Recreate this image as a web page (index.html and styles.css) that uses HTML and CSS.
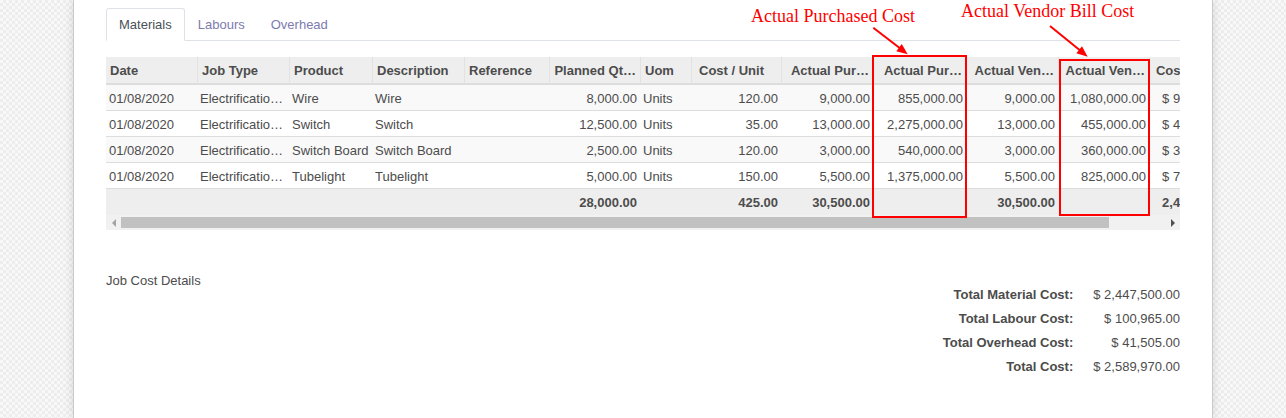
FILE: index.html
```html
<!DOCTYPE html>
<html lang="en">
<head>
<meta charset="utf-8">
<title>Job Cost Sheet</title>
<link rel="stylesheet" href="styles.css">
</head>
<body>
<div class="sheet">
  <ul class="tabs">
    <li class="tab active">Materials</li>
    <li class="tab">Labours</li>
    <li class="tab">Overhead</li>
  </ul>

  <div class="grid-wrap">
    <div class="grid-clip">
      <table class="grid">
        <colgroup>
          <col class="w91"><col class="w92"><col class="w83"><col class="w92"><col class="w85">
          <col class="w91"><col class="w51"><col class="w90"><col class="w92"><col class="w93">
          <col class="w92"><col class="w91"><col class="w92">
        </colgroup>
        <thead>
          <tr>
            <th>Date</th>
            <th>Job Type</th>
            <th>Product</th>
            <th>Description</th>
            <th>Reference</th>
            <th class="num">Planned Qt…</th>
            <th>Uom</th>
            <th class="num pad-sort">Cost / Unit</th>
            <th class="num">Actual Pur…</th>
            <th class="num">Actual Pur…</th>
            <th class="num">Actual Ven…</th>
            <th class="num">Actual Ven…</th>
            <th class="num">Cost Amount</th>
          </tr>
        </thead>
        <tbody>
          <tr>
            <td>01/08/2020</td><td>Electrificatio…</td><td>Wire</td><td>Wire</td><td></td>
            <td class="num">8,000.00</td><td>Units</td><td class="num">120.00</td><td class="num">9,000.00</td>
            <td class="num">855,000.00</td><td class="num">9,000.00</td><td class="num">1,080,000.00</td><td class="num">$ 960,000.00</td>
          </tr>
          <tr>
            <td>01/08/2020</td><td>Electrificatio…</td><td>Switch</td><td>Switch</td><td></td>
            <td class="num">12,500.00</td><td>Units</td><td class="num">35.00</td><td class="num">13,000.00</td>
            <td class="num">2,275,000.00</td><td class="num">13,000.00</td><td class="num">455,000.00</td><td class="num">$ 437,500.00</td>
          </tr>
          <tr>
            <td>01/08/2020</td><td>Electrificatio…</td><td>Switch Board</td><td>Switch Board</td><td></td>
            <td class="num">2,500.00</td><td>Units</td><td class="num">120.00</td><td class="num">3,000.00</td>
            <td class="num">540,000.00</td><td class="num">3,000.00</td><td class="num">360,000.00</td><td class="num">$ 300,000.00</td>
          </tr>
          <tr>
            <td>01/08/2020</td><td>Electrificatio…</td><td>Tubelight</td><td>Tubelight</td><td></td>
            <td class="num">5,000.00</td><td>Units</td><td class="num">150.00</td><td class="num">5,500.00</td>
            <td class="num">1,375,000.00</td><td class="num">5,500.00</td><td class="num">825,000.00</td><td class="num">$ 750,000.00</td>
          </tr>
        </tbody>
        <tfoot>
          <tr>
            <td></td><td></td><td></td><td></td><td></td>
            <td class="num">28,000.00</td><td></td><td class="num">425.00</td><td class="num">30,500.00</td>
            <td></td><td class="num">30,500.00</td><td></td><td class="num">2,447,500.00</td>
          </tr>
        </tfoot>
      </table>
    </div>
    <div class="hscroll">
      <span class="sb-btn"><span class="tri tri-left"></span></span>
      <div class="sb-track"><div class="sb-thumb"></div></div>
      <span class="sb-btn"><span class="tri tri-right"></span></span>
    </div>
  </div>

  <div class="summary">
    <div class="summary-title">Job Cost Details</div>
    <dl class="totals">
      <dt>Total Material Cost:</dt><dd>$ 2,447,500.00</dd>
      <dt>Total Labour Cost:</dt><dd>$ 100,965.00</dd>
      <dt>Total Overhead Cost:</dt><dd>$ 41,505.00</dd>
      <dt>Total Cost:</dt><dd>$ 2,589,970.00</dd>
    </dl>
  </div>
</div>

<div class="annot annot-1">Actual Purchased Cost</div>
<div class="annot annot-2">Actual Vendor Bill Cost</div>
<div class="callout-box box-1"></div>
<div class="callout-box box-2"></div>
<svg class="arrows" width="1286" height="418" viewBox="0 0 1286 418" aria-hidden="true">
  <line x1="873.3" y1="27.7" x2="900" y2="48.3" stroke="#ff0000" stroke-width="2"/>
  <polygon points="907.7,54.3 896.3,51.2 901.8,44.0" fill="#ff0000"/>
  <line x1="1050" y1="26" x2="1080.5" y2="50.7" stroke="#ff0000" stroke-width="2"/>
  <polygon points="1087.7,56.7 1076.3,53.2 1082.0,46.2" fill="#ff0000"/>
</svg>
</body>
</html>
```

FILE: styles.css
```css
html, body {
  margin: 0;
  padding: 0;
}

body {
  background-color: #f8f8f8;
  background-image: conic-gradient(#ededed 25%, transparent 0 50%, #ededed 0 75%, transparent 0);
  background-size: 6px 6px;
  font-family: "Liberation Sans", Arial, sans-serif;
  font-size: 13px;
  color: #4c4c4c;
  min-height: 418px;
  overflow: hidden;
}

.sheet {
  box-sizing: border-box;
  width: 1140px;
  min-height: 418px;
  margin: 0 auto;
  padding: 8px 32px 0;
  background: #fff;
  border-left: 1px solid #c9c9d4;
  border-right: 1px solid #c9c9d4;
  box-shadow: 0 0 10px rgba(0, 0, 0, 0.13);
}

/* Tabs */
.tabs {
  display: flex;
  list-style: none;
  margin: 0;
  padding: 0;
  border-bottom: 1px solid #dee2e6;
}

.tab {
  padding: 6px 12px;
  line-height: 19px;
  border: 1px solid transparent;
  border-radius: 3px 3px 0 0;
  margin-bottom: -1px;
  color: #7c7bad;
}

.tab.active {
  color: #495057;
  background: #fff;
  border-color: #dee2e6 #dee2e6 #fff;
}

/* Grid */
.grid-wrap {
  margin-top: 16px;
}

.grid-clip {
  overflow: hidden;
}

.grid {
  width: 1135px;
  table-layout: fixed;
  border-collapse: separate;
  border-spacing: 0;
}

.w51 { width: 51px; }
.w83 { width: 83px; }
.w85 { width: 85px; }
.w90 { width: 90px; }
.w91 { width: 91px; }
.w92 { width: 92px; }
.w93 { width: 93px; }

.grid th {
  background: #eeeeee;
  font-weight: bold;
  text-align: left;
  padding: 4px 4px 2px;
  line-height: 20px;
  border-bottom: 2px solid #dddddd;
  white-space: nowrap;
  overflow: hidden;
}

.grid th + th {
  border-left: 1px solid #e2e2e2;
}

.grid td {
  padding: 4px 3px 2px;
  line-height: 19px;
  border-bottom: 1px solid #dddddd;
  white-space: nowrap;
  overflow: hidden;
}

.grid tbody tr:nth-child(odd) td {
  background: #f9f9f9;
}

.grid tfoot td {
  background: #eeeeee;
  font-weight: bold;
  line-height: 20px;
  border-bottom: 0;
}

.grid .num {
  text-align: right;
}

.grid th.pad-sort {
  padding-right: 17px;
}

/* Horizontal scrollbar */
.hscroll {
  display: flex;
  height: 15px;
  background: #f1f1f1;
}

.sb-btn {
  width: 15px;
  height: 15px;
  display: flex;
  align-items: center;
  justify-content: center;
}

.tri {
  width: 0;
  height: 0;
  border-top: 4px solid transparent;
  border-bottom: 4px solid transparent;
}

.tri-left {
  border-right: 4px solid #a3a3a3;
}

.tri-right {
  border-left: 4px solid #505050;
}

.sb-track {
  flex: 1;
  padding: 2px 0;
}

.sb-thumb {
  width: 988px;
  height: 11px;
  background: #c1c1c1;
}

/* Summary */
.summary {
  display: flex;
  justify-content: space-between;
  align-items: flex-start;
  margin-top: 42px;
}

.summary-title {
  line-height: 18px;
}

.totals {
  display: grid;
  grid-template-columns: auto auto;
  column-gap: 20px;
  margin: 11px 0 0;
  line-height: 24px;
}

.totals dt {
  font-weight: bold;
  text-align: right;
}

.totals dd {
  margin: 0;
  text-align: right;
}

/* Annotations overlay */
.annot {
  position: absolute;
  font-family: "Liberation Serif", "Times New Roman", serif;
  font-size: 18px;
  line-height: 18px;
  color: #ff0000;
  white-space: nowrap;
}

.annot-1 {
  left: 751px;
  top: 7px;
}

.annot-2 {
  left: 961px;
  top: 2px;
}

.callout-box {
  position: absolute;
  box-sizing: border-box;
  border: 2px solid #ff0000;
}

.box-1 {
  left: 872px;
  top: 55px;
  width: 95px;
  height: 163px;
}

.box-2 {
  left: 1059px;
  top: 59px;
  width: 91px;
  height: 157px;
}

.arrows {
  position: absolute;
  left: 0;
  top: 0;
  pointer-events: none;
}
```
